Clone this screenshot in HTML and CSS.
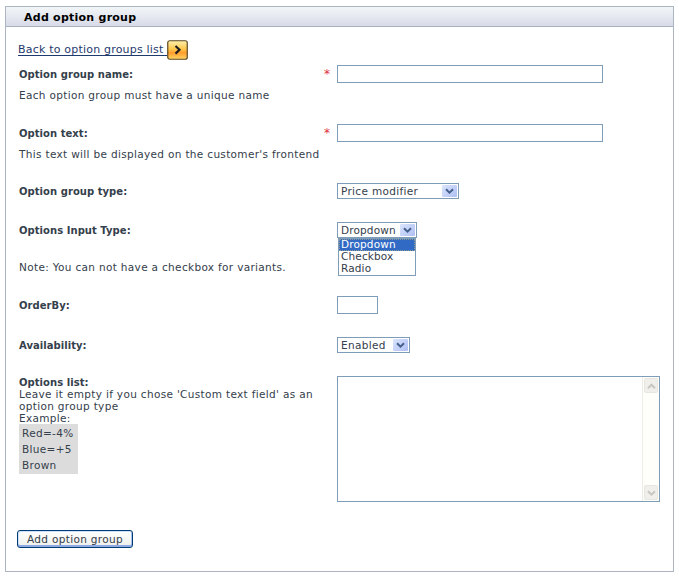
FILE: index.html
```html
<!DOCTYPE html>
<html lang="en">
<head>
    <meta charset="UTF-8">
    <title>Add option group</title>
    <link rel="stylesheet" href="styles.css">
</head>
<body>
    <div class="panel">
        <h1>Add option group</h1>
        <form class="content">
            <a class="back" href="#"><span>Back to option groups list </span><svg width="21" height="20" viewBox="0 0 21 20">
                <defs>
                    <linearGradient id="gold" x1="0" y1="0" x2="0" y2="1">
                        <stop offset="0" stop-color="#fff0ae"/>
                        <stop offset=".45" stop-color="#ffc84c"/>
                        <stop offset=".65" stop-color="#ff9c2c"/>
                        <stop offset="1" stop-color="#ffd865"/>
                    </linearGradient>
                </defs>
                <rect x=".75" y=".75" width="19.5" height="18.5" rx="2" fill="url(#gold)" stroke="#5c4722" stroke-width="1.2"/>
                <path d="M8.5 6l4 3.8-4 3.8" fill="none" stroke="#1c1c20" stroke-width="2.2"/>
            </svg></a>

            <div class="row tall">
                <div class="text">
                    <label for="name">Option group name:</label>
                    <p class="help">Each option group must have a unique name</p>
                </div>
                <span class="required">*</span>
                <input type="text" id="name">
            </div>
            <div class="row tall">
                <div class="text">
                    <label for="text">Option text:</label>
                    <p class="help">This text will be displayed on the customer's frontend</p>
                </div>
                <span class="required">*</span>
                <input type="text" id="text">
            </div>
            <div class="row type">
                <div class="text"><label>Option group type:</label></div>
                <div class="select wide"><span>Price modifier</span><i><svg width="9" height="7" viewBox="0 0 9 7"><path d="M1 1.2l3.5 3.5L8 1.2"/></svg></i></div>
            </div>
            <div class="row input-type">
                <div class="text">
                    <label>Options Input Type:</label>
                    <p class="note">Note: You can not have a checkbox for variants.</p>
                </div>
                <div class="select medium"><span>Dropdown</span><i><svg width="9" height="7" viewBox="0 0 9 7"><path d="M1 1.2l3.5 3.5L8 1.2"/></svg></i>
                    <ul class="menu">
                        <li class="selected">Dropdown</li>
                        <li>Checkbox</li>
                        <li>Radio</li>
                    </ul>
                </div>
            </div>
            <div class="row order">
                <div class="text"><label for="orderby">OrderBy:</label></div>
                <input type="text" id="orderby" class="short">
            </div>
            <div class="row type">
                <div class="text"><label>Availability:</label></div>
                <div class="select small"><span>Enabled</span><i><svg width="9" height="7" viewBox="0 0 9 7"><path d="M1 1.2l3.5 3.5L8 1.2"/></svg></i></div>
            </div>
            <div class="row options">
                <div class="text list">
                    <b>Options list:</b>
                    <p>Leave it empty if you chose 'Custom text field' as an<br>option group type</p>
                    <p>Example:</p>
                    <div class="example">Red=-4%<br>Blue=+5<br>Brown</div>
                </div>
                <div class="textarea">
                    <div class="scrollbar">
                        <i><svg width="9" height="7" viewBox="0 0 9 7"><path d="M1 5.2l3.5-3.5L8 5.2"/></svg></i>
                        <i><svg width="9" height="7" viewBox="0 0 9 7"><path d="M1 1.2l3.5 3.5L8 1.2"/></svg></i>
                    </div>
                </div>
            </div>
            <button type="button">Add option group</button>
        </form>
    </div>
</body>
</html>
```
FILE: styles.css
```css
* {
    box-sizing: border-box;
}
body {
    margin: 0;
    padding: 6px 5px 5px;
    background: #fff;
    color: #34404b;
    font-family: Verdana, "DejaVu Sans", sans-serif;
    font-size: 10.5px;
    letter-spacing: 0.33px;
    line-height: 12px;
}
p, ul {
    margin: 0;
    padding: 0;
}
.panel {
    width: 669px;
    height: 566px;
    border: 1px solid #adb5c2;
}
h1 {
    height: 20px;
    margin: 0;
    padding-left: 18px;
    border-bottom: 1px solid #a9b3bf;
    background: linear-gradient(#f3f6f7, #d7dbe8);
    color: #000;
    font-size: 11px;
    letter-spacing: 0.25px;
    line-height: 21px;
}
.content {
    padding: 12px 0 0 13px;
}
.back {
    display: flex;
    align-items: center;
    height: 21px;
    margin: 0 0 5px -1px;
    color: #1f3a6e;
    font-size: 11px;
    letter-spacing: 0.2px;
    text-decoration: none;
}
.back span {
    width: 149px;
    height: 12px;
    border-bottom: 1px solid #1f3a6e;
    line-height: 12px;
    white-space: pre;
}
.row {
    display: grid;
    grid-template-columns: 305px 13px auto;
    align-items: start;
    justify-content: start;
}
.row > :last-child {
    grid-column: 3;
}
.tall {
    height: 59px;
}
.type {
    height: 39px;
}
.input-type {
    height: 74px;
}
.order {
    height: 41px;
}
.options {
    height: 154px;
}
.text {
    white-space: nowrap;
}
label, b {
    display: block;
    font-size: 10px;
    font-weight: bold;
    letter-spacing: 0.05px;
}
label {
    line-height: 18px;
}
.tall label, .order label {
    line-height: 20px;
}
.type label {
    line-height: 18px;
}
.help {
    margin-top: 4px;
}
.note {
    margin-top: 21px;
}
.required {
    color: #e0303c;
    font-size: 12px;
    line-height: 19px;
}
input {
    width: 266px;
    height: 18px;
    padding: 1px 3px;
    border: 1px solid #7f9db9;
    font: inherit;
}
.short {
    width: 41px;
}
.select {
    position: relative;
    display: flex;
    justify-content: space-between;
    height: 16px;
    padding: 1px 1px 1px 3px;
    border: 1px solid #7f9db9;
    line-height: 13px;
}
.select i {
    width: 15px;
    height: 12px;
    border-radius: 1px;
    background: linear-gradient(135deg, #dbe5fd, #aebff3);
    text-align: center;
    line-height: 0;
    padding-top: 3px;
}
.select path {
    fill: none;
    stroke: #44608c;
    stroke-width: 2;
}
.wide {
    width: 122px;
}
.medium {
    width: 80px;
    letter-spacing: 0.15px;
}
.small {
    width: 73px;
}
.menu {
    position: absolute;
    top: 15px;
    left: 0;
    width: 78px;
    border: 1px solid #7f9db9;
    background: #fff;
    list-style: none;
}
.menu li {
    height: 12px;
    padding-left: 2px;
    line-height: 11px;
}
.menu .selected {
    outline: 1px dotted #8f9a92;
    outline-offset: -1px;
    background: #316ac5;
    color: #fff;
}
.list b {
    line-height: 14px;
    margin-bottom: -2px;
}
.example {
    width: 59px;
    padding: 1px 3px;
    background: #dcdcdc;
    line-height: 16px;
}
.textarea {
    display: flex;
    justify-content: flex-end;
    width: 323px;
    height: 126px;
    border: 1px solid #7f9db9;
}
.scrollbar {
    display: flex;
    flex-direction: column;
    justify-content: space-between;
    width: 17px;
    padding: 1px;
    border-left: 1px solid #eeede5;
    background: #fefefb;
}
.scrollbar i {
    width: 14px;
    height: 15px;
    padding-top: 4px;
    border: 1px solid #e8e7df;
    border-radius: 2px;
    background: #f0efeb;
    line-height: 0;
    text-align: center;
}
.scrollbar path {
    fill: none;
    stroke: #c8c7bf;
    stroke-width: 2;
}
button {
    display: block;
    width: 116px;
    height: 18px;
    margin-left: -2px;
    padding: 0;
    border: 1px solid #003c74;
    border-radius: 3px;
    background: linear-gradient(#fff, #eeeeea);
    box-shadow: inset 0 -2px #8ea9e3, inset 1px 1px #cee0fb, inset -1px 0 #a8c0ee;
    color: #34404b;
    font: inherit;
    letter-spacing: inherit;
    white-space: nowrap;
}
```
